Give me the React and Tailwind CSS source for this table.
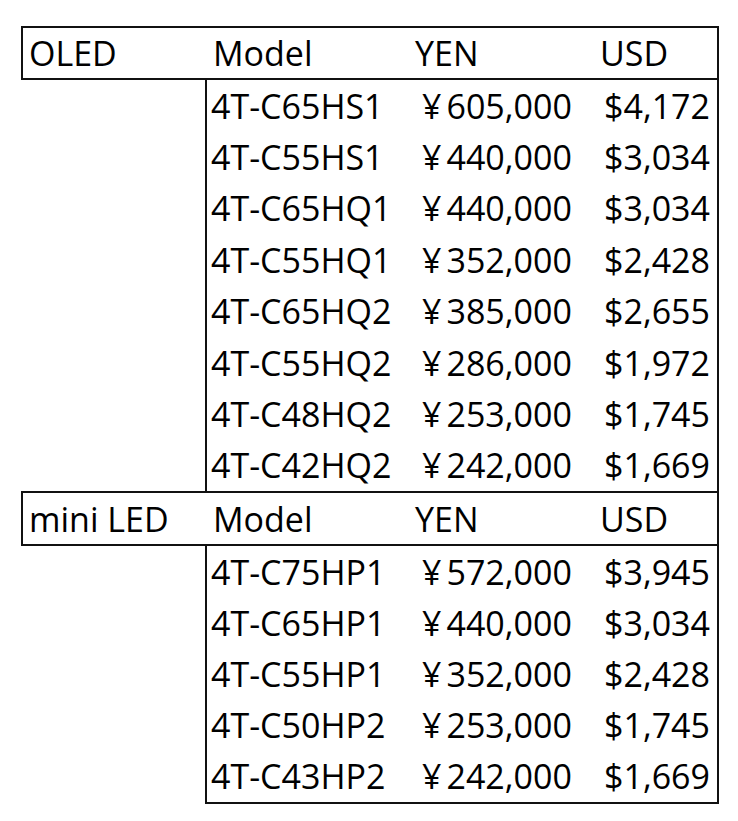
import React from "react";

const oled = [
  ["4T-C65HS1", "605,000", "$4,172"],
  ["4T-C55HS1", "440,000", "$3,034"],
  ["4T-C65HQ1", "440,000", "$3,034"],
  ["4T-C55HQ1", "352,000", "$2,428"],
  ["4T-C65HQ2", "385,000", "$2,655"],
  ["4T-C55HQ2", "286,000", "$1,972"],
  ["4T-C48HQ2", "253,000", "$1,745"],
  ["4T-C42HQ2", "242,000", "$1,669"],
];

const mini = [
  ["4T-C75HP1", "572,000", "$3,945"],
  ["4T-C65HP1", "440,000", "$3,034"],
  ["4T-C55HP1", "352,000", "$2,428"],
  ["4T-C50HP2", "253,000", "$1,745"],
  ["4T-C43HP2", "242,000", "$1,669"],
];

function Header({ label, h }) {
  return (
    <div className={`grid grid-cols-[189px_202px_185px_1fr] items-center border-2 border-[#111] ${h}`}>
      <div className="pl-[6px]">{label}</div>
      <div className="pl-[1px]">Model</div>
      <div className="pl-[1px]">YEN</div>
      <div className="pl-[1px]">USD</div>
    </div>
  );
}

function Rows({ rows, rowH, last }) {
  return (
    <div className={`ml-[184px] border-x-2 border-[#111] ${last ? "border-b-2" : ""}`}>
      {rows.map((r) => (
        <div key={r[0]} className={`grid grid-cols-[211px_182px_1fr] items-center pl-[4px] ${rowH}`}>
          <div>{r[0]}</div>
          <div>
            <span className="mr-[5px]">¥</span>
            {r[1]}
          </div>
          <div>{r[2]}</div>
        </div>
      ))}
    </div>
  );
}

export default function App() {
  return (
    <div
      className="min-h-[821px] w-[738px] bg-white pt-[26px] text-[34px] leading-none text-black whitespace-nowrap"
      style={{ fontFamily: '"Open Sans", "Noto Sans", sans-serif' }}
    >
      <div className="ml-[21px] w-[698px]">
        <Header label="OLED" h="h-[54px]" />
        <Rows rows={oled} rowH="h-[51.375px]" />
        <Header label="mini LED" h="h-[55px]" />
        <Rows rows={mini} rowH="h-[51.2px]" last />
      </div>
    </div>
  );
}
